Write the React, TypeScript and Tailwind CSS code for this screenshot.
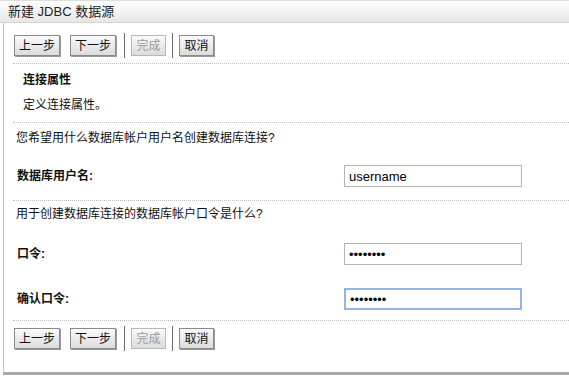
import React from "react";

const font = { fontFamily: '"Liberation Sans", "Noto Sans CJK SC", sans-serif' };

type BtnProps = { label: string; disabled?: boolean; w: string };

const Btn: React.FC<BtnProps> = ({ label, disabled, w }) => (
  <button
    disabled={disabled}
    className={`h-[21px] ${w} border text-[12px] leading-none flex items-center justify-center bg-gradient-to-b from-[#fafafa] to-[#dcdcdc] ${
      disabled
        ? "border-[#b8b8b8] text-[#9a9a9a]"
        : "border-[#8a8a8a] text-[#111] shadow-[1px_1px_0_#9a9a9a]"
    }`}
  >
    {label}
  </button>
);

const Sep = () => <span className="w-px h-[25px] bg-[#6b6b6b] mx-[6px]" />;

const Toolbar = () => (
  <div className="flex items-center h-[25px] pl-[10px]">
    <Btn label="上一步" w="w-[46px]" />
    <span className="w-[10px]" />
    <Btn label="下一步" w="w-[46px]" />
    <span className="w-[2px]" />
    <Sep />
    <Btn label="完成" disabled w="w-[35px]" />
    <Sep />
    <Btn label="取消" w="w-[35px]" />
  </div>
);

const Dots = () => <div className="ml-[9px] border-t border-dotted border-[#bdbdbd]" />;

type FieldProps = { label: string; value: string; type?: string; focused?: boolean };

const Field: React.FC<FieldProps> = ({ label, value, type = "text", focused }) => (
  <div className="flex items-center pl-[13px]">
    <span className="w-[327px] text-[12px] font-bold text-[#111]">{label}</span>
    <input
      readOnly
      type={type}
      value={value}
      autoFocus={focused}
      className={`w-[178px] h-[22px] px-[4px] text-[13px] text-black outline-none ${
        focused
          ? "border-2 border-[#93b4ea]"
          : "border border-[#b5b5b0]"
      }`}
      style={font}
    />
  </div>
);

export default function App() {
  return (
    <div className="w-[569px] h-[376px] bg-white overflow-hidden" style={font}>
      <div className="h-[23px] flex items-center pl-[8px] text-[13px] text-[#222] bg-gradient-to-b from-[#fdfdfd] via-[#f3f3f3] to-[#e6e6e4] border-b border-[#d4d4d4] border-t border-t-[#dedede]">
        新建 JDBC 数据源
      </div>
      <div className="ml-[3px] h-[352px] border-l border-[#c4c4c4] border-b-[3px] border-b-[#a8a8a8] text-[12px] text-[#111]">
        <div className="h-[10px]" />
        <Toolbar />
        <div className="h-[5px]" />
        <Dots />
        <div className="h-[16px] mt-[8px] pl-[19px] font-bold flex items-center">连接属性</div>
        <div className="h-[16px] mt-[9px] pl-[19px] flex items-center">定义连接属性。</div>
        <div className="h-[9px]" />
        <Dots />
        <div className="h-[16px] mt-[7px] pl-[12px] flex items-center">您希望用什么数据库帐户用户名创建数据库连接?</div>
        <div className="mt-[19px]">
          <Field label="数据库用户名:" value="username" />
        </div>
        <div className="h-[13px]" />
        <Dots />
        <div className="h-[16px] mt-[5px] pl-[12px] flex items-center">用于创建数据库连接的数据库帐户口令是什么?</div>
        <div className="mt-[21px]">
          <Field label="口令:" value="12345678" type="password" />
        </div>
        <div className="mt-[23px]">
          <Field label="确认口令:" value="12345678" type="password" focused />
        </div>
        <div className="h-[10px]" />
        <Dots />
        <div className="h-[5px]" />
        <Toolbar />
      </div>
    </div>
  );
}
